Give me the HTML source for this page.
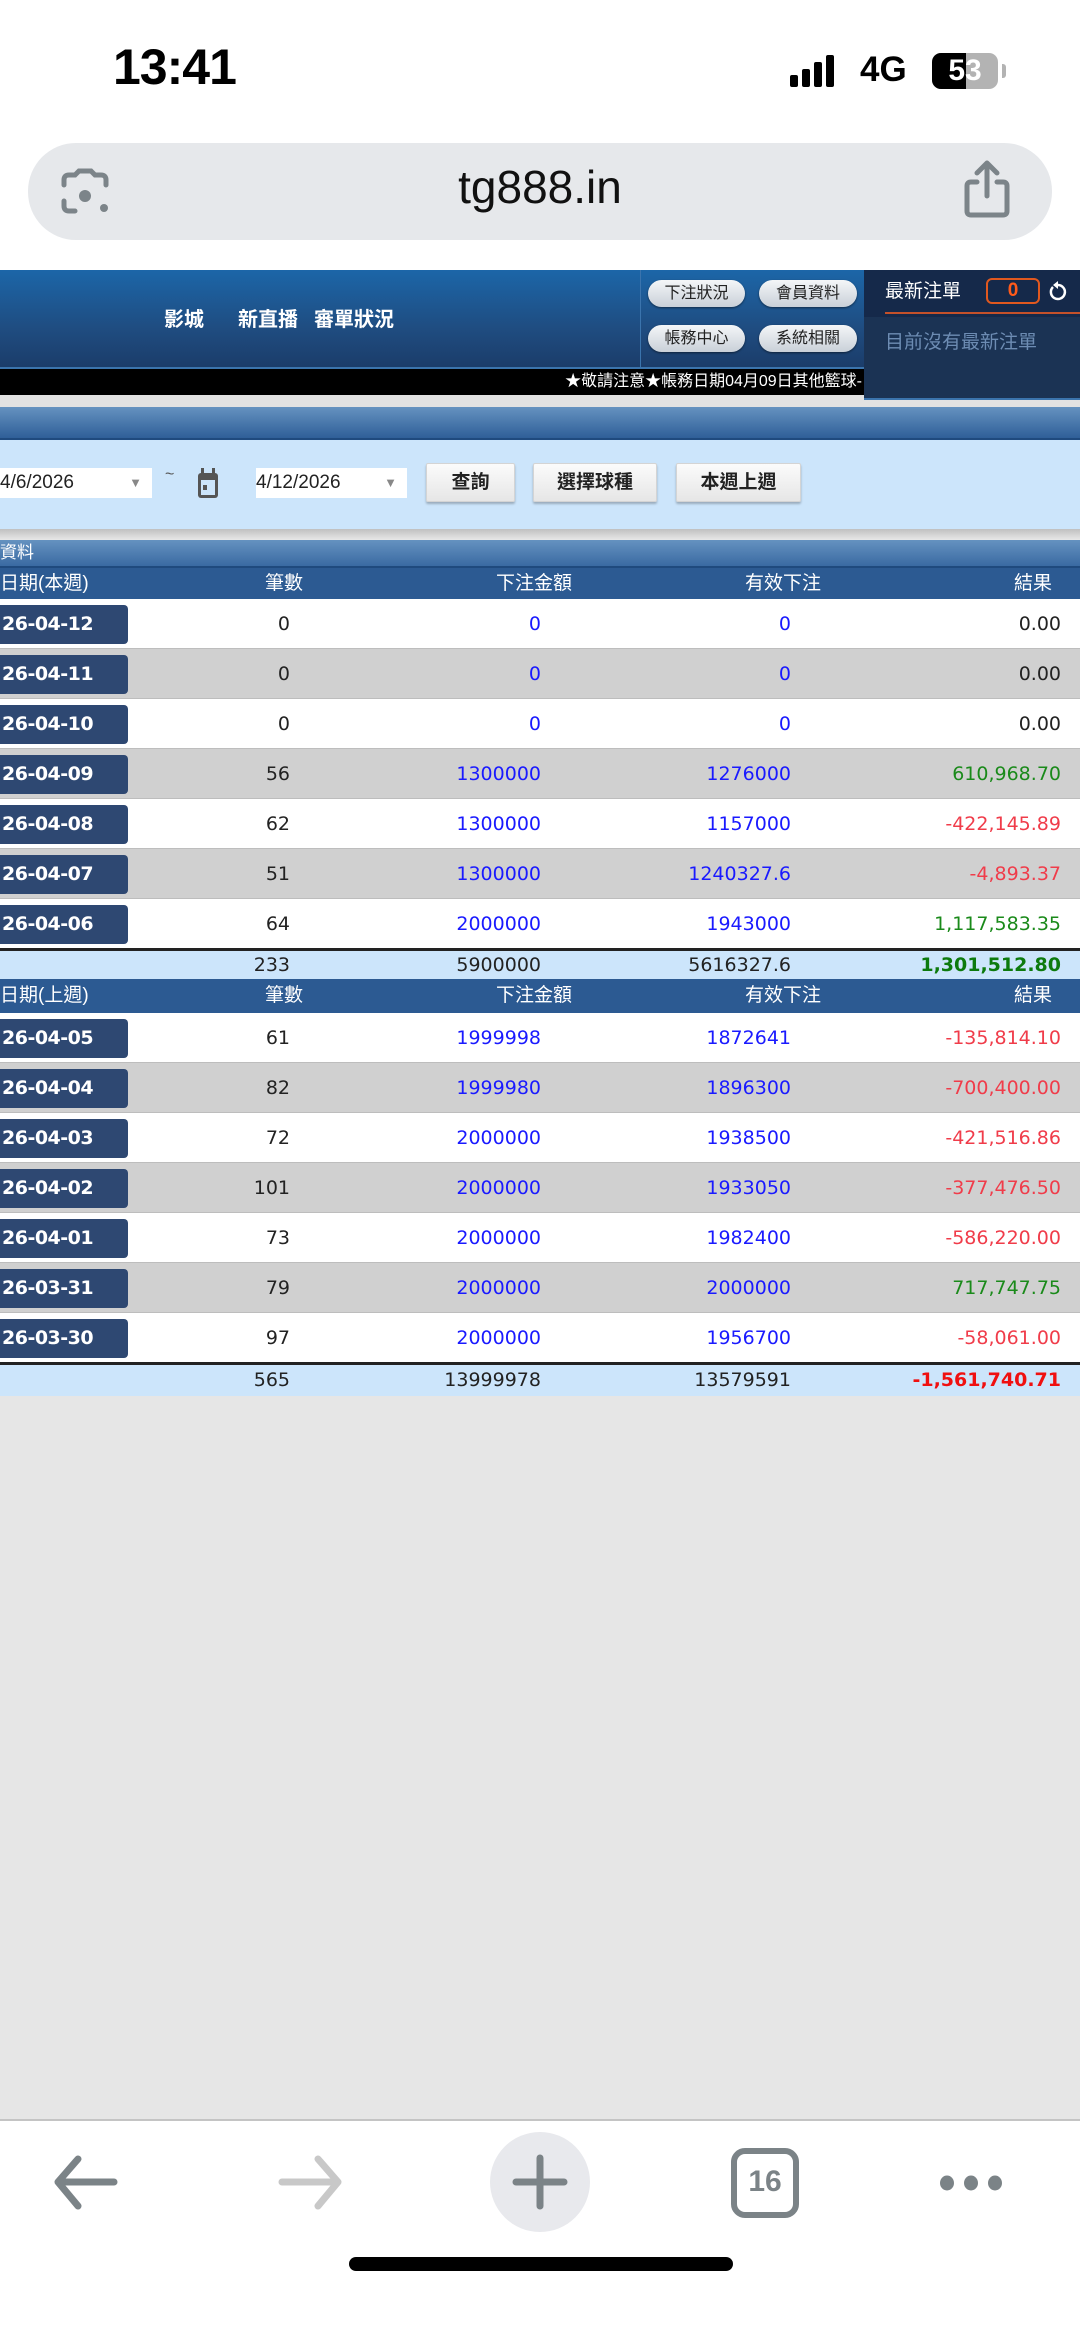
<!DOCTYPE html>
<html><head><meta charset="utf-8"><style>
*{margin:0;padding:0;box-sizing:border-box}
body{width:1080px;height:2337px;position:relative;background:#e6e6e6;font-family:"Liberation Sans","Noto Sans CJK TC",sans-serif;overflow:hidden}
.a{position:absolute}
.num{font-family:"DejaVu Sans","Noto Sans CJK TC",sans-serif}
.pill{position:absolute;height:27px;border-radius:14px;background:linear-gradient(#f4f6f8,#c9d0d8);color:#222;font-size:16px;text-align:center;line-height:27px;box-shadow:0 1px 2px rgba(0,0,0,.5)}
.btn{position:absolute;top:463px;height:39px;background:linear-gradient(#fbfbfb,#e6e6e6);border:1px solid #d4d4d4;box-shadow:0 2px 2px rgba(0,0,0,.25);font-size:19px;text-align:center;line-height:37px;color:#222;font-weight:bold;border-radius:2px}
.row{position:absolute;left:0;width:1080px;height:50px;border-bottom:1px solid #bdbdbd}
.row .d{position:absolute;left:0;top:6px;width:128px;height:39px;background:#2e4872;border-radius:0 4px 4px 0;color:#fff;font-weight:bold;font-size:19px;line-height:39px;padding-left:2px;font-family:"DejaVu Sans",sans-serif;letter-spacing:-0.5px}
.row span,.sum span{position:absolute;top:0;line-height:50px;font-size:19px;text-align:right}
.c1{right:790px}.c2{right:539px}.c3{right:289px}.c4{right:19px}
.hdr{position:absolute;left:0;width:1080px;background:#2c5a92;color:#fff;font-size:19px}
.hdr span{position:absolute;top:0}
.b{color:#1a1aff}.g{color:#1a8a1a}.r{color:#f03c4a}.k{color:#222}
.sum{position:absolute;left:0;width:1080px;height:33px;background:#cce5fb}
.sum span{line-height:33px}
</style></head><body>
<div class="a" style="left:0;top:0;width:1080px;height:270px;background:#fff"></div>
<div class="a" style="left:113px;top:38px;font-size:50px;font-weight:bold;color:#000;letter-spacing:-1px">13:41</div>
<svg class="a" style="left:790px;top:55px" width="60" height="32"><rect x="0" y="20" width="8" height="12" rx="2"/><rect x="12" y="14" width="8" height="18" rx="2"/><rect x="24" y="7" width="8" height="25" rx="2"/><rect x="36" y="0" width="8" height="32" rx="2"/></svg>
<div class="a" style="left:860px;top:50px;font-size:35px;font-weight:bold">4G</div>
<div class="a" style="left:932px;top:53px;width:66px;height:36px;border-radius:9px;background:#b3b3b3;overflow:hidden"><div style="width:34px;height:36px;background:#000"></div><div class="a" style="left:0;top:0;width:66px;text-align:center;font-size:30px;font-weight:bold;color:#fff;line-height:36px">53</div></div>
<div class="a" style="left:1002px;top:64px;width:4px;height:14px;border-radius:0 3px 3px 0;background:#b3b3b3"></div>
<div class="a" style="left:28px;top:143px;width:1024px;height:97px;border-radius:48px;background:#e6e8eb"></div>
<div class="a" style="left:0;top:160px;width:1080px;text-align:center;font-size:46px;color:#111">tg888.in</div>
<svg class="a" style="left:60px;top:167px" width="54" height="54" fill="none" stroke="#7c8489" stroke-width="5" stroke-linecap="round"><path d="M4 18v-5q0-5 5-5h6l4-4h12l4 4h6q5 0 5 5v5"/><path d="M4 34v5q0 5 5 5h6"/><circle cx="25" cy="29" r="6" fill="#7c8489" stroke="none"/><circle cx="44" cy="41" r="4" fill="#7c8489" stroke="none"/></svg>
<svg class="a" style="left:963px;top:160px" width="50" height="60" fill="none" stroke="#7c8489" stroke-width="5" stroke-linecap="round" stroke-linejoin="round"><path d="M14 22h-6q-4 0-4 4v25q0 4 4 4h32q4 0 4-4v-25q0-4-4-4h-6"/><path d="M24 36v-32M14 13l10-10 10 10"/></svg>
<div class="a" style="left:0;top:270px;width:864px;height:99px;background:linear-gradient(#1c66a8,#1f4c80 60%,#1b3c69)"></div>
<div class="a" style="left:640px;top:270px;width:1px;height:99px;background:#3b74ad"></div>
<div class="a" style="left:0;top:367px;width:864px;height:2px;background:#3b74ad"></div>
<div class="a" style="left:164px;top:303px;color:#fff;font-size:20px;font-weight:bold">影城</div>
<div class="a" style="left:238px;top:303px;color:#fff;font-size:20px;font-weight:bold">新直播</div>
<div class="a" style="left:314px;top:303px;color:#fff;font-size:20px;font-weight:bold">審單狀況</div>
<div class="pill" style="left:648px;top:280px;width:97px">下注狀況</div>
<div class="pill" style="left:759px;top:280px;width:98px">會員資料</div>
<div class="pill" style="left:648px;top:325px;width:97px">帳務中心</div>
<div class="pill" style="left:759px;top:325px;width:98px">系統相關</div>
<div class="a" style="left:0;top:369px;width:864px;height:26px;background:#000;color:#fff;font-size:16px;line-height:26px;text-align:right;padding-right:2px;white-space:nowrap">★敬請注意★帳務日期04月09日其他籃球-</div>
<div class="a" style="left:864px;top:270px;width:216px;height:130px;background:#1b3354"></div>
<div class="a" style="left:864px;top:270px;width:216px;height:47px;background:#15294a"></div>
<div class="a" style="left:885px;top:276px;color:#fff;font-size:19px">最新注單</div>
<div class="a" style="left:986px;top:278px;width:54px;height:26px;border:2px solid #e0581f;border-radius:6px;color:#ff5a1a;text-align:center;line-height:22px;font-size:19px;font-weight:bold">0</div>
<svg class="a" style="left:1047px;top:280px" width="22" height="22" fill="none" stroke="#fff" stroke-width="2.5"><path d="M6 7a7 7 0 1 0 5-2"/><path d="M11 1v8l-5-4z" fill="#fff" stroke="none"/></svg>
<div class="a" style="left:885px;top:312px;width:195px;height:2px;background:#c4512a"></div>
<div class="a" style="left:885px;top:327px;color:#6d8cb3;font-size:19px">目前沒有最新注單</div>
<div class="a" style="left:864px;top:398px;width:216px;height:2px;background:#3b74ad"></div>
<div class="a" style="left:0;top:395px;width:864px;height:12px;background:#e2e2e2"></div>
<div class="a" style="left:864px;top:400px;width:216px;height:7px;background:#e2e2e2"></div>
<div class="a" style="left:0;top:407px;width:1080px;height:33px;background:linear-gradient(#6592c0,#2f5f98);border-bottom:2px solid #1f4a7e"></div>
<div class="a" style="left:0;top:440px;width:1080px;height:89px;background:#cce5fb"></div>
<div class="a" style="left:0;top:468px;width:152px;height:30px;background:#fff;font-size:19px;line-height:30px;color:#222">4/6/2026<span style="position:absolute;right:10px;color:#888;font-size:13px">▼</span></div>
<div class="a" style="left:165px;top:466px;font-size:16px;color:#555">~</div>
<svg class="a" style="left:196px;top:468px" width="24" height="31"><rect x="2" y="5" width="20" height="25" rx="3" fill="#555"/><rect x="5" y="12" width="14" height="15" fill="#cce5fb"/><rect x="7" y="17" width="4" height="5" fill="#555"/><rect x="5" y="0" width="3" height="7" fill="#555"/><rect x="16" y="0" width="3" height="7" fill="#555"/></svg>
<div class="a" style="left:256px;top:468px;width:151px;height:30px;background:#fff;font-size:19px;line-height:30px;color:#222">4/12/2026<span style="position:absolute;right:10px;color:#888;font-size:13px">▼</span></div>
<div class="btn" style="left:426px;width:89px">查詢</div>
<div class="btn" style="left:533px;width:124px">選擇球種</div>
<div class="btn" style="left:676px;width:125px">本週上週</div>
<div class="a" style="left:0;top:529px;width:1080px;height:11px;background:linear-gradient(#c0c0c0,#e8e8e8)"></div>
<div class="a" style="left:0;top:540px;width:1080px;height:28px;background:linear-gradient(#6592c0,#3a6aa2);border-bottom:2px solid #1f4a7e;color:#fff;font-size:17px;line-height:26px">資料</div>
<div class="hdr" style="top:568px;height:31px;line-height:31px"><span style="left:0">日期(本週)</span><span style="left:265px">筆數</span><span style="left:496px">下注金額</span><span style="left:745px">有效下注</span><span style="left:1014px">結果</span></div>
<div class="row num" style="top:599px;background:#fff"><div class="d">26-04-12</div><span class="c1 k">0</span><span class="c2 b">0</span><span class="c3 b">0</span><span class="c4 k">0.00</span></div>
<div class="row num" style="top:649px;background:#d0d0d0"><div class="d">26-04-11</div><span class="c1 k">0</span><span class="c2 b">0</span><span class="c3 b">0</span><span class="c4 k">0.00</span></div>
<div class="row num" style="top:699px;background:#fff"><div class="d">26-04-10</div><span class="c1 k">0</span><span class="c2 b">0</span><span class="c3 b">0</span><span class="c4 k">0.00</span></div>
<div class="row num" style="top:749px;background:#d0d0d0"><div class="d">26-04-09</div><span class="c1 k">56</span><span class="c2 b">1300000</span><span class="c3 b">1276000</span><span class="c4 g">610,968.70</span></div>
<div class="row num" style="top:799px;background:#fff"><div class="d">26-04-08</div><span class="c1 k">62</span><span class="c2 b">1300000</span><span class="c3 b">1157000</span><span class="c4 r">-422,145.89</span></div>
<div class="row num" style="top:849px;background:#d0d0d0"><div class="d">26-04-07</div><span class="c1 k">51</span><span class="c2 b">1300000</span><span class="c3 b">1240327.6</span><span class="c4 r">-4,893.37</span></div>
<div class="row num" style="top:899px;background:#fff;border-bottom:none"><div class="d">26-04-06</div><span class="c1 k">64</span><span class="c2 b">2000000</span><span class="c3 b">1943000</span><span class="c4 g">1,117,583.35</span></div>
<div class="a" style="left:0;top:948px;width:1080px;height:3px;background:#222"></div>
<div class="sum num" style="top:951px;height:28px"><span class="c1 k" style="line-height:28px">233</span><span class="c2 k" style="line-height:28px">5900000</span><span class="c3 k" style="line-height:28px">5616327.6</span><span class="c4 g" style="line-height:28px;font-weight:bold;color:#0d7a0d">1,301,512.80</span></div>
<div class="hdr" style="top:979px;height:34px;line-height:34px"><span style="left:0">日期(上週)</span><span style="left:265px">筆數</span><span style="left:496px">下注金額</span><span style="left:745px">有效下注</span><span style="left:1014px">結果</span></div>
<div class="row num" style="top:1013px;background:#fff"><div class="d">26-04-05</div><span class="c1 k">61</span><span class="c2 b">1999998</span><span class="c3 b">1872641</span><span class="c4 r">-135,814.10</span></div>
<div class="row num" style="top:1063px;background:#d0d0d0"><div class="d">26-04-04</div><span class="c1 k">82</span><span class="c2 b">1999980</span><span class="c3 b">1896300</span><span class="c4 r">-700,400.00</span></div>
<div class="row num" style="top:1113px;background:#fff"><div class="d">26-04-03</div><span class="c1 k">72</span><span class="c2 b">2000000</span><span class="c3 b">1938500</span><span class="c4 r">-421,516.86</span></div>
<div class="row num" style="top:1163px;background:#d0d0d0"><div class="d">26-04-02</div><span class="c1 k">101</span><span class="c2 b">2000000</span><span class="c3 b">1933050</span><span class="c4 r">-377,476.50</span></div>
<div class="row num" style="top:1213px;background:#fff"><div class="d">26-04-01</div><span class="c1 k">73</span><span class="c2 b">2000000</span><span class="c3 b">1982400</span><span class="c4 r">-586,220.00</span></div>
<div class="row num" style="top:1263px;background:#d0d0d0"><div class="d">26-03-31</div><span class="c1 k">79</span><span class="c2 b">2000000</span><span class="c3 b">2000000</span><span class="c4 g">717,747.75</span></div>
<div class="row num" style="top:1313px;background:#fff;border-bottom:none"><div class="d">26-03-30</div><span class="c1 k">97</span><span class="c2 b">2000000</span><span class="c3 b">1956700</span><span class="c4 r">-58,061.00</span></div>
<div class="a" style="left:0;top:1362px;width:1080px;height:3px;background:#222"></div>
<div class="sum num" style="top:1365px;height:31px"><span class="c1 k" style="line-height:31px">565</span><span class="c2 k" style="line-height:31px">13999978</span><span class="c3 k" style="line-height:31px">13579591</span><span class="c4" style="line-height:31px;font-weight:bold;color:#f01010">-1,561,740.71</span></div>
<div class="a" style="left:0;top:2119px;width:1080px;height:218px;background:#fff;border-top:2px solid #c4c4c4"></div>
<svg class="a" style="left:52px;top:2155px" width="70" height="55" fill="none" stroke="#7b8387" stroke-width="7" stroke-linecap="round" stroke-linejoin="round"><path d="M62 27H6M26 4L6 27l20 24"/></svg>
<svg class="a" style="left:278px;top:2155px" width="70" height="55" fill="none" stroke="#c8c8c8" stroke-width="7" stroke-linecap="round" stroke-linejoin="round"><path d="M4 27h56M40 4l20 23-20 24"/></svg>
<div class="a" style="left:490px;top:2132px;width:100px;height:100px;border-radius:50%;background:#e8e9ed"></div>
<svg class="a" style="left:512px;top:2154px" width="56" height="56" stroke="#7b8387" stroke-width="7" stroke-linecap="round"><path d="M28 4v48M4 28h48"/></svg>
<div class="a" style="left:731px;top:2148px;width:68px;height:70px;border:6px solid #7b8387;border-radius:14px;text-align:center;line-height:56px;font-size:30px;font-weight:bold;color:#7b8387">16</div>
<svg class="a" style="left:938px;top:2168px" width="110" height="30" fill="#7b8387"><ellipse cx="9" cy="15" rx="7" ry="7.5"/><ellipse cx="33" cy="15" rx="7" ry="7.5"/><ellipse cx="57" cy="15" rx="7" ry="7.5"/></svg>
<div class="a" style="left:349px;top:2257px;width:384px;height:14px;border-radius:7px;background:#000"></div>
</body></html>
